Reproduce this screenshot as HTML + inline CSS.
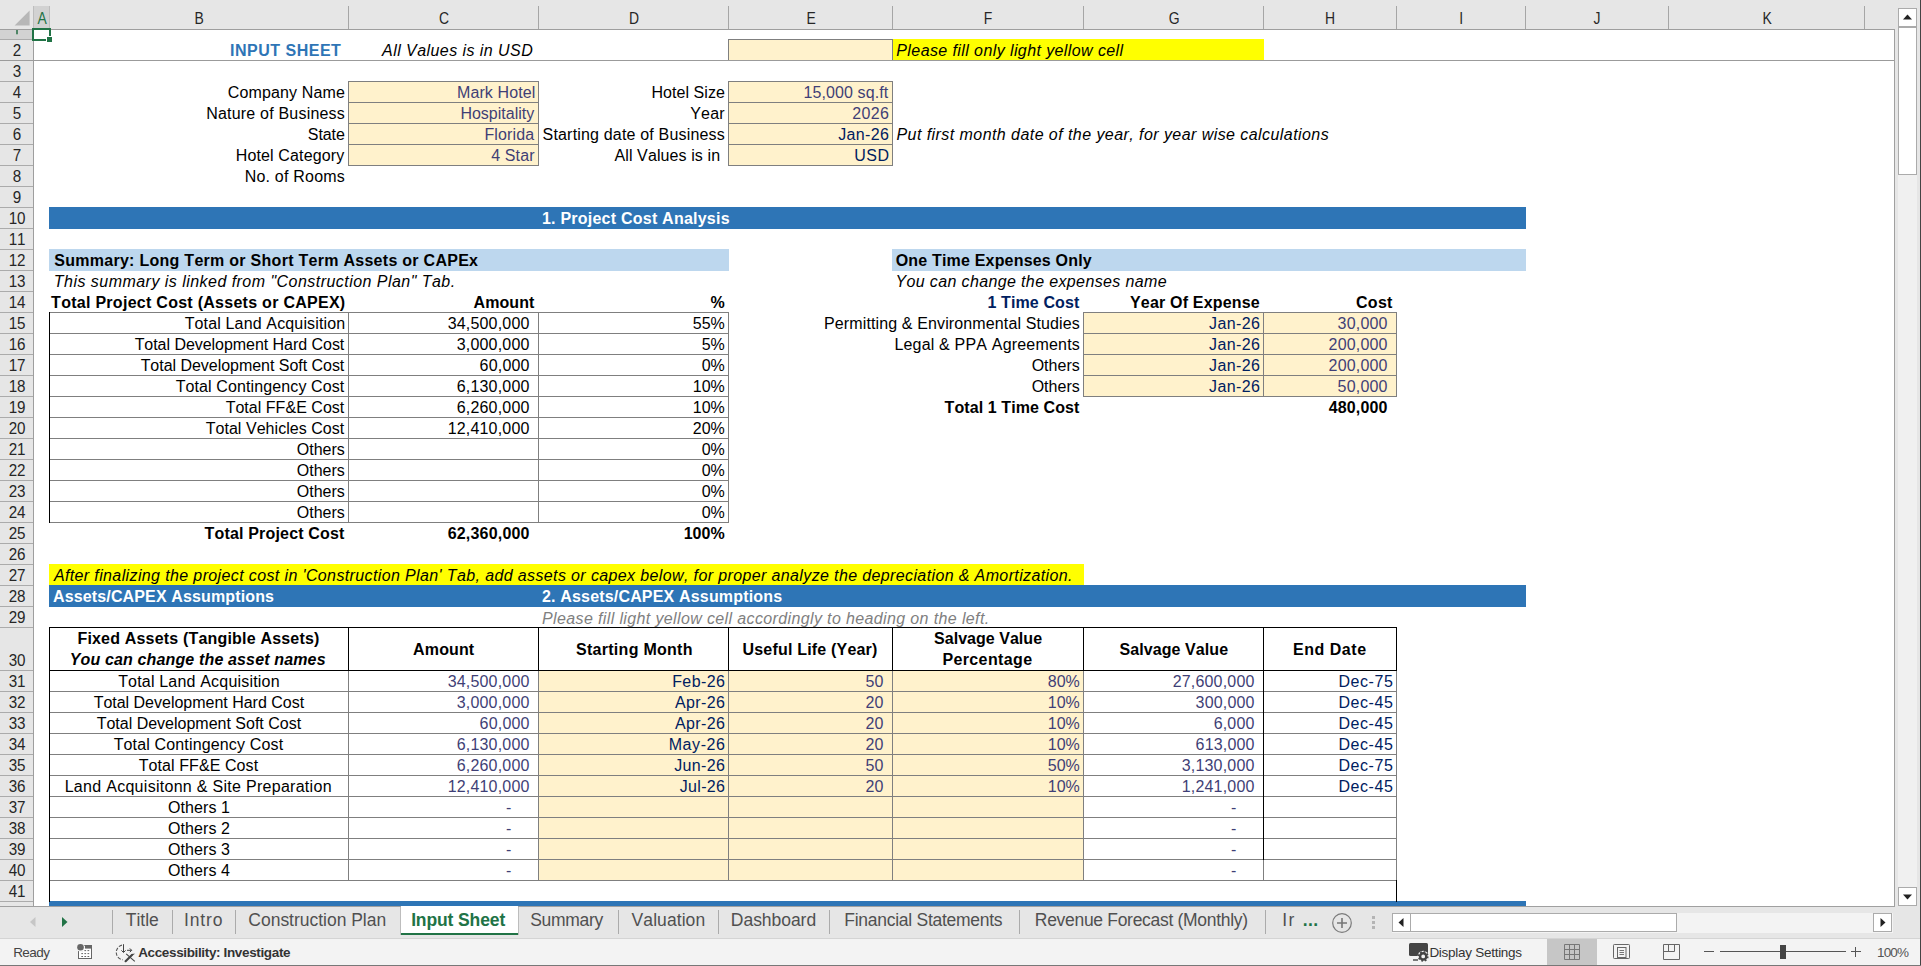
<!DOCTYPE html>
<html><head><meta charset="utf-8"><title>Input Sheet</title><style>
html,body{margin:0;padding:0}
body{width:1921px;height:966px;position:relative;overflow:hidden;background:#fff;font-family:"Liberation Sans",sans-serif;font-kerning:none;font-variant-ligatures:none}
body>div,body>svg{position:absolute}
.t{white-space:pre}
.h{font-size:16px;line-height:22px;height:22px;text-align:center;color:#262626;letter-spacing:-0.2px}
.tab{top:907px;height:27px;line-height:26px;font-size:17.5px;color:#4a4a4a;text-align:center;white-space:pre;letter-spacing:-0.1px}
.s{font-size:13px;line-height:18px;height:18px;color:#444;white-space:pre;margin-top:1px}
</style></head>
<body>
<div style="left:0px;top:0px;width:1921px;height:29px;background:#e6e6e6;"></div>
<div style="left:0px;top:30px;width:33px;height:876px;background:#e6e6e6;"></div>
<div style="left:34px;top:6px;width:15px;height:23px;background:#d2d2d2;"></div>
<div style="left:0px;top:30px;width:33px;height:9px;background:#d2d2d2;"></div>
<div style="left:0px;top:29px;width:1895px;height:1px;background:#9e9e9e;"></div>
<div style="left:33px;top:30px;width:1px;height:876px;background:#9e9e9e;"></div>
<div style="left:49px;top:6px;width:1px;height:23px;background:#bdbdbd;"></div>
<div style="left:348px;top:6px;width:1px;height:23px;background:#a6a6a6;"></div>
<div style="left:538px;top:6px;width:1px;height:23px;background:#a6a6a6;"></div>
<div style="left:728px;top:6px;width:1px;height:23px;background:#a6a6a6;"></div>
<div style="left:892px;top:6px;width:1px;height:23px;background:#a6a6a6;"></div>
<div style="left:1083px;top:6px;width:1px;height:23px;background:#a6a6a6;"></div>
<div style="left:1263px;top:6px;width:1px;height:23px;background:#a6a6a6;"></div>
<div style="left:1396px;top:6px;width:1px;height:23px;background:#a6a6a6;"></div>
<div style="left:1525px;top:6px;width:1px;height:23px;background:#a6a6a6;"></div>
<div style="left:1668px;top:6px;width:1px;height:23px;background:#a6a6a6;"></div>
<div style="left:1864px;top:6px;width:1px;height:23px;background:#a6a6a6;"></div>
<div style="left:33px;top:6px;width:1px;height:23px;background:#bdbdbd;"></div>
<svg style="left:13px;top:9px" width="18" height="18" viewBox="0 0 18 18"><path d="M16.6 1.6 L16.6 16.6 L1.6 16.6 Z" fill="#b7b7b7"/></svg>
<div class="h" style="left:-8.5px;width:100px;top:7.5px;color:#217346;transform:scaleX(0.87)">A</div>
<div class="h" style="left:149.0px;width:100px;top:7.5px;color:#262626;transform:scaleX(0.87)">B</div>
<div class="h" style="left:393.5px;width:100px;top:7.5px;color:#262626;transform:scaleX(0.87)">C</div>
<div class="h" style="left:583.5px;width:100px;top:7.5px;color:#262626;transform:scaleX(0.87)">D</div>
<div class="h" style="left:760.5px;width:100px;top:7.5px;color:#262626;transform:scaleX(0.87)">E</div>
<div class="h" style="left:938.0px;width:100px;top:7.5px;color:#262626;transform:scaleX(0.87)">F</div>
<div class="h" style="left:1123.5px;width:100px;top:7.5px;color:#262626;transform:scaleX(0.87)">G</div>
<div class="h" style="left:1280.0px;width:100px;top:7.5px;color:#262626;transform:scaleX(0.87)">H</div>
<div class="h" style="left:1411.0px;width:100px;top:7.5px;color:#262626;transform:scaleX(0.87)">I</div>
<div class="h" style="left:1547.0px;width:100px;top:7.5px;color:#262626;transform:scaleX(0.87)">J</div>
<div class="h" style="left:1716.5px;width:100px;top:7.5px;color:#262626;transform:scaleX(0.87)">K</div>
<div style="left:0px;top:39px;width:33px;height:1px;background:#ababab;"></div>
<div style="left:16px;top:30px;width:2px;height:4px;background:#4f8566;"></div>
<div style="left:16px;top:34px;width:2px;height:1px;background:#a9c0b1;"></div>
<div style="left:0px;top:60px;width:33px;height:1px;background:#ababab;"></div>
<div class="h" style="left:-33px;width:100px;top:40px;transform:scaleX(0.95)">2</div>
<div style="left:0px;top:81px;width:33px;height:1px;background:#ababab;"></div>
<div class="h" style="left:-33px;width:100px;top:61px;transform:scaleX(0.95)">3</div>
<div style="left:0px;top:102px;width:33px;height:1px;background:#ababab;"></div>
<div class="h" style="left:-33px;width:100px;top:82px;transform:scaleX(0.95)">4</div>
<div style="left:0px;top:123px;width:33px;height:1px;background:#ababab;"></div>
<div class="h" style="left:-33px;width:100px;top:103px;transform:scaleX(0.95)">5</div>
<div style="left:0px;top:144px;width:33px;height:1px;background:#ababab;"></div>
<div class="h" style="left:-33px;width:100px;top:124px;transform:scaleX(0.95)">6</div>
<div style="left:0px;top:165px;width:33px;height:1px;background:#ababab;"></div>
<div class="h" style="left:-33px;width:100px;top:145px;transform:scaleX(0.95)">7</div>
<div style="left:0px;top:186px;width:33px;height:1px;background:#ababab;"></div>
<div class="h" style="left:-33px;width:100px;top:166px;transform:scaleX(0.95)">8</div>
<div style="left:0px;top:207px;width:33px;height:1px;background:#ababab;"></div>
<div class="h" style="left:-33px;width:100px;top:187px;transform:scaleX(0.95)">9</div>
<div style="left:0px;top:228px;width:33px;height:1px;background:#ababab;"></div>
<div class="h" style="left:-33px;width:100px;top:208px;transform:scaleX(0.95)">10</div>
<div style="left:0px;top:249px;width:33px;height:1px;background:#ababab;"></div>
<div class="h" style="left:-33px;width:100px;top:229px;transform:scaleX(0.95)">11</div>
<div style="left:0px;top:270px;width:33px;height:1px;background:#ababab;"></div>
<div class="h" style="left:-33px;width:100px;top:250px;transform:scaleX(0.95)">12</div>
<div style="left:0px;top:291px;width:33px;height:1px;background:#ababab;"></div>
<div class="h" style="left:-33px;width:100px;top:271px;transform:scaleX(0.95)">13</div>
<div style="left:0px;top:312px;width:33px;height:1px;background:#ababab;"></div>
<div class="h" style="left:-33px;width:100px;top:292px;transform:scaleX(0.95)">14</div>
<div style="left:0px;top:333px;width:33px;height:1px;background:#ababab;"></div>
<div class="h" style="left:-33px;width:100px;top:313px;transform:scaleX(0.95)">15</div>
<div style="left:0px;top:354px;width:33px;height:1px;background:#ababab;"></div>
<div class="h" style="left:-33px;width:100px;top:334px;transform:scaleX(0.95)">16</div>
<div style="left:0px;top:375px;width:33px;height:1px;background:#ababab;"></div>
<div class="h" style="left:-33px;width:100px;top:355px;transform:scaleX(0.95)">17</div>
<div style="left:0px;top:396px;width:33px;height:1px;background:#ababab;"></div>
<div class="h" style="left:-33px;width:100px;top:376px;transform:scaleX(0.95)">18</div>
<div style="left:0px;top:417px;width:33px;height:1px;background:#ababab;"></div>
<div class="h" style="left:-33px;width:100px;top:397px;transform:scaleX(0.95)">19</div>
<div style="left:0px;top:438px;width:33px;height:1px;background:#ababab;"></div>
<div class="h" style="left:-33px;width:100px;top:418px;transform:scaleX(0.95)">20</div>
<div style="left:0px;top:459px;width:33px;height:1px;background:#ababab;"></div>
<div class="h" style="left:-33px;width:100px;top:439px;transform:scaleX(0.95)">21</div>
<div style="left:0px;top:480px;width:33px;height:1px;background:#ababab;"></div>
<div class="h" style="left:-33px;width:100px;top:460px;transform:scaleX(0.95)">22</div>
<div style="left:0px;top:501px;width:33px;height:1px;background:#ababab;"></div>
<div class="h" style="left:-33px;width:100px;top:481px;transform:scaleX(0.95)">23</div>
<div style="left:0px;top:522px;width:33px;height:1px;background:#ababab;"></div>
<div class="h" style="left:-33px;width:100px;top:502px;transform:scaleX(0.95)">24</div>
<div style="left:0px;top:543px;width:33px;height:1px;background:#ababab;"></div>
<div class="h" style="left:-33px;width:100px;top:523px;transform:scaleX(0.95)">25</div>
<div style="left:0px;top:564px;width:33px;height:1px;background:#ababab;"></div>
<div class="h" style="left:-33px;width:100px;top:544px;transform:scaleX(0.95)">26</div>
<div style="left:0px;top:585px;width:33px;height:1px;background:#ababab;"></div>
<div class="h" style="left:-33px;width:100px;top:565px;transform:scaleX(0.95)">27</div>
<div style="left:0px;top:606px;width:33px;height:1px;background:#ababab;"></div>
<div class="h" style="left:-33px;width:100px;top:586px;transform:scaleX(0.95)">28</div>
<div style="left:0px;top:627px;width:33px;height:1px;background:#ababab;"></div>
<div class="h" style="left:-33px;width:100px;top:607px;transform:scaleX(0.95)">29</div>
<div style="left:0px;top:670px;width:33px;height:1px;background:#ababab;"></div>
<div class="h" style="left:-33px;width:100px;top:650px;transform:scaleX(0.95)">30</div>
<div style="left:0px;top:691px;width:33px;height:1px;background:#ababab;"></div>
<div class="h" style="left:-33px;width:100px;top:671px;transform:scaleX(0.95)">31</div>
<div style="left:0px;top:712px;width:33px;height:1px;background:#ababab;"></div>
<div class="h" style="left:-33px;width:100px;top:692px;transform:scaleX(0.95)">32</div>
<div style="left:0px;top:733px;width:33px;height:1px;background:#ababab;"></div>
<div class="h" style="left:-33px;width:100px;top:713px;transform:scaleX(0.95)">33</div>
<div style="left:0px;top:754px;width:33px;height:1px;background:#ababab;"></div>
<div class="h" style="left:-33px;width:100px;top:734px;transform:scaleX(0.95)">34</div>
<div style="left:0px;top:775px;width:33px;height:1px;background:#ababab;"></div>
<div class="h" style="left:-33px;width:100px;top:755px;transform:scaleX(0.95)">35</div>
<div style="left:0px;top:796px;width:33px;height:1px;background:#ababab;"></div>
<div class="h" style="left:-33px;width:100px;top:776px;transform:scaleX(0.95)">36</div>
<div style="left:0px;top:817px;width:33px;height:1px;background:#ababab;"></div>
<div class="h" style="left:-33px;width:100px;top:797px;transform:scaleX(0.95)">37</div>
<div style="left:0px;top:838px;width:33px;height:1px;background:#ababab;"></div>
<div class="h" style="left:-33px;width:100px;top:818px;transform:scaleX(0.95)">38</div>
<div style="left:0px;top:859px;width:33px;height:1px;background:#ababab;"></div>
<div class="h" style="left:-33px;width:100px;top:839px;transform:scaleX(0.95)">39</div>
<div style="left:0px;top:880px;width:33px;height:1px;background:#ababab;"></div>
<div class="h" style="left:-33px;width:100px;top:860px;transform:scaleX(0.95)">40</div>
<div style="left:0px;top:901px;width:33px;height:1px;background:#ababab;"></div>
<div class="h" style="left:-33px;width:100px;top:881px;transform:scaleX(0.95)">41</div>
<div style="left:892px;top:39px;width:372px;height:22px;background:#ffff00;"></div>
<div style="left:728px;top:39px;width:165px;height:22px;background:#fff2cc;"></div>
<div style="left:348px;top:81px;width:191px;height:85px;background:#fff2cc;"></div>
<div style="left:728px;top:81px;width:165px;height:85px;background:#fff2cc;"></div>
<div style="left:49px;top:207px;width:1477px;height:22px;background:#2e75b6;"></div>
<div style="left:49px;top:249px;width:680px;height:22px;background:#bdd7ee;"></div>
<div style="left:892px;top:249px;width:634px;height:22px;background:#bdd7ee;"></div>
<div style="left:1083px;top:312px;width:314px;height:85px;background:#fff2cc;"></div>
<div style="left:49px;top:564px;width:1035px;height:22px;background:#ffff00;"></div>
<div style="left:49px;top:585px;width:1477px;height:22px;background:#2e75b6;"></div>
<div style="left:538px;top:670px;width:546px;height:211px;background:#fff2cc;"></div>
<div style="left:49px;top:901px;width:1477px;height:5px;background:#2e75b6;"></div>
<div style="left:728px;top:60px;width:165px;height:1px;background:#7f7f7f;"></div>
<div style="left:728px;top:39px;width:165px;height:1px;background:#7f7f7f;"></div>
<div style="left:728px;top:39px;width:1px;height:22px;background:#7f7f7f;"></div>
<div style="left:892px;top:39px;width:1px;height:22px;background:#7f7f7f;"></div>
<div style="left:348px;top:102px;width:191px;height:1px;background:#7f7f7f;"></div>
<div style="left:348px;top:123px;width:191px;height:1px;background:#7f7f7f;"></div>
<div style="left:348px;top:144px;width:191px;height:1px;background:#7f7f7f;"></div>
<div style="left:348px;top:165px;width:191px;height:1px;background:#7f7f7f;"></div>
<div style="left:348px;top:81px;width:191px;height:1px;background:#7f7f7f;"></div>
<div style="left:348px;top:81px;width:1px;height:85px;background:#7f7f7f;"></div>
<div style="left:538px;top:81px;width:1px;height:85px;background:#7f7f7f;"></div>
<div style="left:728px;top:102px;width:165px;height:1px;background:#7f7f7f;"></div>
<div style="left:728px;top:123px;width:165px;height:1px;background:#7f7f7f;"></div>
<div style="left:728px;top:144px;width:165px;height:1px;background:#7f7f7f;"></div>
<div style="left:728px;top:165px;width:165px;height:1px;background:#7f7f7f;"></div>
<div style="left:728px;top:81px;width:165px;height:1px;background:#7f7f7f;"></div>
<div style="left:728px;top:81px;width:1px;height:85px;background:#7f7f7f;"></div>
<div style="left:892px;top:81px;width:1px;height:85px;background:#7f7f7f;"></div>
<div style="left:49px;top:333px;width:680px;height:1px;background:#7f7f7f;"></div>
<div style="left:49px;top:354px;width:680px;height:1px;background:#7f7f7f;"></div>
<div style="left:49px;top:375px;width:680px;height:1px;background:#7f7f7f;"></div>
<div style="left:49px;top:396px;width:680px;height:1px;background:#7f7f7f;"></div>
<div style="left:49px;top:417px;width:680px;height:1px;background:#7f7f7f;"></div>
<div style="left:49px;top:438px;width:680px;height:1px;background:#7f7f7f;"></div>
<div style="left:49px;top:459px;width:680px;height:1px;background:#7f7f7f;"></div>
<div style="left:49px;top:480px;width:680px;height:1px;background:#7f7f7f;"></div>
<div style="left:49px;top:501px;width:680px;height:1px;background:#7f7f7f;"></div>
<div style="left:49px;top:522px;width:680px;height:1px;background:#7f7f7f;"></div>
<div style="left:49px;top:312px;width:680px;height:1px;background:#7f7f7f;"></div>
<div style="left:49px;top:312px;width:1px;height:211px;background:#7f7f7f;"></div>
<div style="left:348px;top:312px;width:1px;height:211px;background:#7f7f7f;"></div>
<div style="left:538px;top:312px;width:1px;height:211px;background:#7f7f7f;"></div>
<div style="left:728px;top:312px;width:1px;height:211px;background:#7f7f7f;"></div>
<div style="left:49px;top:312px;width:1px;height:211px;background:#000;"></div>
<div style="left:1083px;top:333px;width:314px;height:1px;background:#7f7f7f;"></div>
<div style="left:1083px;top:354px;width:314px;height:1px;background:#7f7f7f;"></div>
<div style="left:1083px;top:375px;width:314px;height:1px;background:#7f7f7f;"></div>
<div style="left:1083px;top:396px;width:314px;height:1px;background:#7f7f7f;"></div>
<div style="left:1083px;top:312px;width:314px;height:1px;background:#7f7f7f;"></div>
<div style="left:1083px;top:312px;width:1px;height:85px;background:#7f7f7f;"></div>
<div style="left:1263px;top:312px;width:1px;height:85px;background:#7f7f7f;"></div>
<div style="left:1396px;top:312px;width:1px;height:85px;background:#7f7f7f;"></div>
<div style="left:49px;top:691px;width:1348px;height:1px;background:#7f7f7f;"></div>
<div style="left:49px;top:712px;width:1348px;height:1px;background:#7f7f7f;"></div>
<div style="left:49px;top:733px;width:1348px;height:1px;background:#7f7f7f;"></div>
<div style="left:49px;top:754px;width:1348px;height:1px;background:#7f7f7f;"></div>
<div style="left:49px;top:775px;width:1348px;height:1px;background:#7f7f7f;"></div>
<div style="left:49px;top:796px;width:1348px;height:1px;background:#7f7f7f;"></div>
<div style="left:49px;top:817px;width:1348px;height:1px;background:#7f7f7f;"></div>
<div style="left:49px;top:838px;width:1348px;height:1px;background:#7f7f7f;"></div>
<div style="left:49px;top:859px;width:1348px;height:1px;background:#7f7f7f;"></div>
<div style="left:49px;top:880px;width:1348px;height:1px;background:#7f7f7f;"></div>
<div style="left:49px;top:670px;width:1348px;height:1px;background:#7f7f7f;"></div>
<div style="left:49px;top:670px;width:1px;height:211px;background:#7f7f7f;"></div>
<div style="left:348px;top:670px;width:1px;height:211px;background:#7f7f7f;"></div>
<div style="left:538px;top:670px;width:1px;height:211px;background:#7f7f7f;"></div>
<div style="left:728px;top:670px;width:1px;height:211px;background:#7f7f7f;"></div>
<div style="left:892px;top:670px;width:1px;height:211px;background:#7f7f7f;"></div>
<div style="left:1083px;top:670px;width:1px;height:211px;background:#7f7f7f;"></div>
<div style="left:1263px;top:670px;width:1px;height:211px;background:#7f7f7f;"></div>
<div style="left:1396px;top:670px;width:1px;height:211px;background:#7f7f7f;"></div>
<div style="left:49px;top:627px;width:1348px;height:1px;background:#000;"></div>
<div style="left:49px;top:670px;width:1348px;height:1px;background:#000;"></div>
<div style="left:49px;top:627px;width:1px;height:44px;background:#000;"></div>
<div style="left:348px;top:627px;width:1px;height:44px;background:#000;"></div>
<div style="left:538px;top:627px;width:1px;height:44px;background:#000;"></div>
<div style="left:728px;top:627px;width:1px;height:44px;background:#000;"></div>
<div style="left:892px;top:627px;width:1px;height:44px;background:#000;"></div>
<div style="left:1083px;top:627px;width:1px;height:44px;background:#000;"></div>
<div style="left:1263px;top:627px;width:1px;height:44px;background:#000;"></div>
<div style="left:1396px;top:627px;width:1px;height:44px;background:#000;"></div>
<div style="left:49px;top:627px;width:1px;height:275px;background:#000;"></div>
<div style="left:1263px;top:627px;width:1px;height:233px;background:#000;"></div>
<div style="left:1396px;top:880px;width:1px;height:22px;background:#000;"></div>
<div style="left:0px;top:60px;width:1895px;height:1px;background:#9b9b9b;"></div>
<div class="t" style="top:40px;height:21px;line-height:21px;font-size:16px;color:#2e75b6;font-weight:bold;left:229.93px;letter-spacing:0.515px;">INPUT SHEET</div>
<div class="t" style="top:40px;height:21px;line-height:21px;font-size:16px;color:#000;font-style:italic;left:382.09px;letter-spacing:0.440px;">All Values is in USD</div>
<div class="t" style="top:40px;height:21px;line-height:21px;font-size:16px;color:#000;font-style:italic;left:896.31px;letter-spacing:0.406px;">Please fill only light yellow cell</div>
<div class="t" style="top:82px;height:21px;line-height:21px;font-size:16px;color:#000;left:227.69px;letter-spacing:0.147px;">Company Name</div>
<div class="t" style="top:103px;height:21px;line-height:21px;font-size:16px;color:#000;left:206.19px;letter-spacing:0.201px;">Nature of Business</div>
<div class="t" style="top:124px;height:21px;line-height:21px;font-size:16px;color:#000;left:307.77px;letter-spacing:-0.055px;">State</div>
<div class="t" style="top:145px;height:21px;line-height:21px;font-size:16px;color:#000;left:235.69px;letter-spacing:0.140px;">Hotel Category</div>
<div class="t" style="top:166px;height:21px;line-height:21px;font-size:16px;color:#000;left:244.69px;letter-spacing:0.207px;">No. of Rooms</div>
<div class="t" style="top:82px;height:21px;line-height:21px;font-size:16px;color:#3f3f76;left:456.99px;letter-spacing:0.103px;">Mark Hotel</div>
<div class="t" style="top:103px;height:21px;line-height:21px;font-size:16px;color:#3f3f76;left:460.39px;letter-spacing:0.004px;">Hospitality</div>
<div class="t" style="top:124px;height:21px;line-height:21px;font-size:16px;color:#3f3f76;left:484.39px;letter-spacing:0.151px;">Florida</div>
<div class="t" style="top:145px;height:21px;line-height:21px;font-size:16px;color:#3f3f76;left:491.33px;letter-spacing:0.089px;">4 Star</div>
<div class="t" style="top:82px;height:21px;line-height:21px;font-size:16px;color:#000;left:651.39px;letter-spacing:0.067px;">Hotel Size</div>
<div class="t" style="top:103px;height:21px;line-height:21px;font-size:16px;color:#000;left:690.35px;letter-spacing:0.107px;">Year</div>
<div class="t" style="top:124px;height:21px;line-height:21px;font-size:16px;color:#000;left:542.57px;letter-spacing:0.180px;">Starting date of Business</div>
<div class="t" style="top:145px;height:21px;line-height:21px;font-size:16px;color:#000;left:614.47px;letter-spacing:0.102px;">All Values is in</div>
<div class="t" style="top:82px;height:21px;line-height:21px;font-size:16px;color:#3f3f76;left:803.38px;letter-spacing:0.120px;">15,000 sq.ft</div>
<div class="t" style="top:103px;height:21px;line-height:21px;font-size:16px;color:#3f3f76;left:852.20px;letter-spacing:0.371px;">2026</div>
<div class="t" style="top:124px;height:21px;line-height:21px;font-size:16px;color:#002060;left:838.25px;letter-spacing:0.346px;">Jan-26</div>
<div class="t" style="top:145px;height:21px;line-height:21px;font-size:16px;color:#002060;left:854.37px;letter-spacing:0.409px;">USD</div>
<div class="t" style="top:124px;height:21px;line-height:21px;font-size:16px;color:#000;font-style:italic;left:896.51px;letter-spacing:0.437px;">Put first month date of the year, for year wise calculations</div>
<div class="t" style="top:208px;height:21px;line-height:21px;font-size:16px;color:#fff;font-weight:bold;left:541.99px;letter-spacing:0.229px;">1. Project Cost Analysis</div>
<div class="t" style="top:250px;height:21px;line-height:21px;font-size:16px;color:#000;font-weight:bold;left:54.24px;letter-spacing:0.277px;">Summary: Long Term or Short Term Assets or CAPEx</div>
<div class="t" style="top:250px;height:21px;line-height:21px;font-size:16px;color:#000;font-weight:bold;left:895.64px;letter-spacing:0.189px;">One Time Expenses Only</div>
<div class="t" style="top:271px;height:21px;line-height:21px;font-size:16px;color:#000;font-style:italic;left:53.86px;letter-spacing:0.463px;">This summary is linked from &quot;Construction Plan&quot; Tab.</div>
<div class="t" style="top:271px;height:21px;line-height:21px;font-size:16px;color:#000;font-style:italic;left:895.44px;letter-spacing:0.368px;">You can change the expenses name</div>
<div class="t" style="top:292px;height:21px;line-height:21px;font-size:16px;color:#000;font-weight:bold;left:51.12px;letter-spacing:0.274px;">Total Project Cost (Assets or CAPEX)</div>
<div class="t" style="top:292px;height:21px;line-height:21px;font-size:16px;color:#000;font-weight:bold;letter-spacing:0.095px;right:1386.51px;text-align:right;">Amount</div>
<div class="t" style="top:292px;height:21px;line-height:21px;font-size:16px;color:#000;font-weight:bold;letter-spacing:-0.227px;right:1196.60px;text-align:right;">%</div>
<div class="t" style="top:292px;height:21px;line-height:21px;font-size:16px;color:#002060;font-weight:bold;left:987.39px;letter-spacing:0.132px;">1 Time Cost</div>
<div class="t" style="top:292px;height:21px;line-height:21px;font-size:16px;color:#000;font-weight:bold;left:1130.03px;letter-spacing:0.182px;">Year Of Expense</div>
<div class="t" style="top:292px;height:21px;line-height:21px;font-size:16px;color:#000;font-weight:bold;left:1356.04px;letter-spacing:0.266px;">Cost</div>
<div class="t" style="top:313px;height:21px;line-height:21px;font-size:16px;color:#000;left:184.64px;letter-spacing:0.151px;">Total Land Acquisition</div>
<div class="t" style="top:313px;height:21px;line-height:21px;font-size:16px;color:#000;letter-spacing:0.192px;right:1391.38px;text-align:right;">34,500,000</div>
<div class="t" style="top:313px;height:21px;line-height:21px;font-size:16px;color:#000;letter-spacing:-0.008px;right:1196.24px;text-align:right;">55%</div>
<div class="t" style="top:334px;height:21px;line-height:21px;font-size:16px;color:#000;left:134.64px;letter-spacing:-0.042px;">Total Development Hard Cost</div>
<div class="t" style="top:334px;height:21px;line-height:21px;font-size:16px;color:#000;letter-spacing:0.202px;right:1391.37px;text-align:right;">3,000,000</div>
<div class="t" style="top:334px;height:21px;line-height:21px;font-size:16px;color:#000;letter-spacing:-0.062px;right:1196.29px;text-align:right;">5%</div>
<div class="t" style="top:355px;height:21px;line-height:21px;font-size:16px;color:#000;left:140.64px;letter-spacing:-0.033px;">Total Development Soft Cost</div>
<div class="t" style="top:355px;height:21px;line-height:21px;font-size:16px;color:#000;letter-spacing:0.177px;right:1391.40px;text-align:right;">60,000</div>
<div class="t" style="top:355px;height:21px;line-height:21px;font-size:16px;color:#000;letter-spacing:-0.062px;right:1196.29px;text-align:right;">0%</div>
<div class="t" style="top:376px;height:21px;line-height:21px;font-size:16px;color:#000;left:175.64px;letter-spacing:0.113px;">Total Contingency Cost</div>
<div class="t" style="top:376px;height:21px;line-height:21px;font-size:16px;color:#000;letter-spacing:0.202px;right:1391.37px;text-align:right;">6,130,000</div>
<div class="t" style="top:376px;height:21px;line-height:21px;font-size:16px;color:#000;letter-spacing:-0.008px;right:1196.24px;text-align:right;">10%</div>
<div class="t" style="top:397px;height:21px;line-height:21px;font-size:16px;color:#000;left:225.64px;letter-spacing:0.030px;">Total FF&amp;E Cost</div>
<div class="t" style="top:397px;height:21px;line-height:21px;font-size:16px;color:#000;letter-spacing:0.202px;right:1391.37px;text-align:right;">6,260,000</div>
<div class="t" style="top:397px;height:21px;line-height:21px;font-size:16px;color:#000;letter-spacing:-0.008px;right:1196.24px;text-align:right;">10%</div>
<div class="t" style="top:418px;height:21px;line-height:21px;font-size:16px;color:#000;left:205.64px;letter-spacing:0.047px;">Total Vehicles Cost</div>
<div class="t" style="top:418px;height:21px;line-height:21px;font-size:16px;color:#000;letter-spacing:0.192px;right:1391.38px;text-align:right;">12,410,000</div>
<div class="t" style="top:418px;height:21px;line-height:21px;font-size:16px;color:#000;letter-spacing:-0.008px;right:1196.24px;text-align:right;">20%</div>
<div class="t" style="top:439px;height:21px;line-height:21px;font-size:16px;color:#000;left:296.74px;letter-spacing:0.004px;">Others</div>
<div class="t" style="top:439px;height:21px;line-height:21px;font-size:16px;color:#000;letter-spacing:-0.062px;right:1196.29px;text-align:right;">0%</div>
<div class="t" style="top:460px;height:21px;line-height:21px;font-size:16px;color:#000;left:296.74px;letter-spacing:0.004px;">Others</div>
<div class="t" style="top:460px;height:21px;line-height:21px;font-size:16px;color:#000;letter-spacing:-0.062px;right:1196.29px;text-align:right;">0%</div>
<div class="t" style="top:481px;height:21px;line-height:21px;font-size:16px;color:#000;left:296.74px;letter-spacing:0.004px;">Others</div>
<div class="t" style="top:481px;height:21px;line-height:21px;font-size:16px;color:#000;letter-spacing:-0.062px;right:1196.29px;text-align:right;">0%</div>
<div class="t" style="top:502px;height:21px;line-height:21px;font-size:16px;color:#000;left:296.74px;letter-spacing:0.004px;">Others</div>
<div class="t" style="top:502px;height:21px;line-height:21px;font-size:16px;color:#000;letter-spacing:-0.062px;right:1196.29px;text-align:right;">0%</div>
<div class="t" style="top:523px;height:21px;line-height:21px;font-size:16px;color:#000;font-weight:bold;letter-spacing:0.172px;right:1576.43px;text-align:right;">Total Project Cost</div>
<div class="t" style="top:523px;height:21px;line-height:21px;font-size:16px;color:#000;font-weight:bold;letter-spacing:0.192px;right:1391.35px;text-align:right;">62,360,000</div>
<div class="t" style="top:523px;height:21px;line-height:21px;font-size:16px;color:#000;font-weight:bold;letter-spacing:0.020px;right:1196.36px;text-align:right;">100%</div>
<div class="t" style="top:313px;height:21px;line-height:21px;font-size:16px;color:#000;left:823.99px;letter-spacing:0.125px;">Permitting &amp; Environmental Studies</div>
<div class="t" style="top:313px;height:21px;line-height:21px;font-size:16px;color:#002060;left:1209.05px;letter-spacing:0.386px;">Jan-26</div>
<div class="t" style="top:313px;height:21px;line-height:21px;font-size:16px;color:#3f3f76;letter-spacing:0.177px;right:533.40px;text-align:right;">30,000</div>
<div class="t" style="top:334px;height:21px;line-height:21px;font-size:16px;color:#000;left:894.39px;letter-spacing:0.188px;">Legal &amp; PPA Agreements</div>
<div class="t" style="top:334px;height:21px;line-height:21px;font-size:16px;color:#002060;left:1209.05px;letter-spacing:0.386px;">Jan-26</div>
<div class="t" style="top:334px;height:21px;line-height:21px;font-size:16px;color:#3f3f76;letter-spacing:0.166px;right:533.41px;text-align:right;">200,000</div>
<div class="t" style="top:355px;height:21px;line-height:21px;font-size:16px;color:#000;left:1031.64px;letter-spacing:0.024px;">Others</div>
<div class="t" style="top:355px;height:21px;line-height:21px;font-size:16px;color:#002060;left:1209.05px;letter-spacing:0.386px;">Jan-26</div>
<div class="t" style="top:355px;height:21px;line-height:21px;font-size:16px;color:#3f3f76;letter-spacing:0.166px;right:533.41px;text-align:right;">200,000</div>
<div class="t" style="top:376px;height:21px;line-height:21px;font-size:16px;color:#000;left:1031.64px;letter-spacing:0.024px;">Others</div>
<div class="t" style="top:376px;height:21px;line-height:21px;font-size:16px;color:#002060;left:1209.05px;letter-spacing:0.386px;">Jan-26</div>
<div class="t" style="top:376px;height:21px;line-height:21px;font-size:16px;color:#3f3f76;letter-spacing:0.177px;right:533.40px;text-align:right;">50,000</div>
<div class="t" style="top:397px;height:21px;line-height:21px;font-size:16px;color:#000;font-weight:bold;left:944.62px;letter-spacing:0.089px;">Total 1 Time Cost</div>
<div class="t" style="top:397px;height:21px;line-height:21px;font-size:16px;color:#000;font-weight:bold;letter-spacing:0.166px;right:533.38px;text-align:right;">480,000</div>
<div class="t" style="top:565px;height:21px;line-height:21px;font-size:16px;color:#000;font-style:italic;left:53.89px;letter-spacing:0.374px;">After finalizing the project cost in &#x27;Construction Plan&#x27; Tab, add assets or capex below, for proper analyze the depreciation &amp; Amortization.</div>
<div class="t" style="top:586px;height:21px;line-height:21px;font-size:16px;color:#fff;font-weight:bold;left:53.10px;letter-spacing:0.131px;">Assets/CAPEX Assumptions</div>
<div class="t" style="top:586px;height:21px;line-height:21px;font-size:16px;color:#fff;font-weight:bold;left:541.95px;letter-spacing:0.176px;">2. Assets/CAPEX Assumptions</div>
<div class="t" style="top:608px;height:21px;line-height:21px;font-size:16px;color:#808080;font-style:italic;left:542.01px;letter-spacing:0.372px;">Please fill light yellow cell accordingly to heading on the left.</div>
<div class="t" style="top:628px;height:21px;line-height:21px;font-size:16px;color:#000;font-weight:bold;left:77.43px;letter-spacing:0.185px;">Fixed Assets (Tangible Assets)</div>
<div class="t" style="top:649px;height:21px;line-height:21px;font-size:16px;color:#000;font-weight:bold;font-style:italic;left:69.66px;letter-spacing:0.146px;">You can change the asset names</div>
<div class="t" style="top:639px;height:21px;line-height:21px;font-size:16px;color:#000;font-weight:bold;left:413.10px;letter-spacing:0.133px;">Amount</div>
<div class="t" style="top:639px;height:21px;line-height:21px;font-size:16px;color:#000;font-weight:bold;left:576.04px;letter-spacing:0.276px;">Starting Month</div>
<div class="t" style="top:639px;height:21px;line-height:21px;font-size:16px;color:#000;font-weight:bold;left:742.54px;letter-spacing:0.187px;">Useful Life (Year)</div>
<div class="t" style="top:628px;height:21px;line-height:21px;font-size:16px;color:#000;font-weight:bold;left:934.04px;letter-spacing:0.033px;">Salvage Value</div>
<div class="t" style="top:649px;height:21px;line-height:21px;font-size:16px;color:#000;font-weight:bold;left:942.43px;letter-spacing:0.372px;">Percentage</div>
<div class="t" style="top:639px;height:21px;line-height:21px;font-size:16px;color:#000;font-weight:bold;left:1119.54px;letter-spacing:0.074px;">Salvage Value</div>
<div class="t" style="top:639px;height:21px;line-height:21px;font-size:16px;color:#000;font-weight:bold;left:1292.93px;letter-spacing:0.539px;">End Date</div>
<div class="t" style="top:671px;height:21px;line-height:21px;font-size:16px;color:#000;left:118.14px;letter-spacing:0.189px;">Total Land Acquisition</div>
<div class="t" style="top:671px;height:21px;line-height:21px;font-size:16px;color:#3f3f76;letter-spacing:0.192px;right:1391.38px;text-align:right;">34,500,000</div>
<div class="t" style="top:671px;height:21px;line-height:21px;font-size:16px;color:#002060;left:672.19px;letter-spacing:0.404px;">Feb-26</div>
<div class="t" style="top:671px;height:21px;line-height:21px;font-size:16px;color:#3f3f76;letter-spacing:0.102px;right:1037.47px;text-align:right;">50</div>
<div class="t" style="top:671px;height:21px;line-height:21px;font-size:16px;color:#3f3f76;letter-spacing:-0.008px;right:841.24px;text-align:right;">80%</div>
<div class="t" style="top:671px;height:21px;line-height:21px;font-size:16px;color:#3f3f76;letter-spacing:0.192px;right:666.38px;text-align:right;">27,600,000</div>
<div class="t" style="top:671px;height:21px;line-height:21px;font-size:16px;color:#002060;left:1338.49px;letter-spacing:0.561px;">Dec-75</div>
<div class="t" style="top:692px;height:21px;line-height:21px;font-size:16px;color:#000;left:93.64px;letter-spacing:-0.011px;">Total Development Hard Cost</div>
<div class="t" style="top:692px;height:21px;line-height:21px;font-size:16px;color:#3f3f76;letter-spacing:0.202px;right:1391.37px;text-align:right;">3,000,000</div>
<div class="t" style="top:692px;height:21px;line-height:21px;font-size:16px;color:#002060;left:674.97px;letter-spacing:0.382px;">Apr-26</div>
<div class="t" style="top:692px;height:21px;line-height:21px;font-size:16px;color:#3f3f76;letter-spacing:0.102px;right:1037.47px;text-align:right;">20</div>
<div class="t" style="top:692px;height:21px;line-height:21px;font-size:16px;color:#3f3f76;letter-spacing:-0.008px;right:841.24px;text-align:right;">10%</div>
<div class="t" style="top:692px;height:21px;line-height:21px;font-size:16px;color:#3f3f76;letter-spacing:0.166px;right:666.41px;text-align:right;">300,000</div>
<div class="t" style="top:692px;height:21px;line-height:21px;font-size:16px;color:#002060;left:1338.49px;letter-spacing:0.561px;">Dec-45</div>
<div class="t" style="top:713px;height:21px;line-height:21px;font-size:16px;color:#000;left:96.64px;letter-spacing:-0.002px;">Total Development Soft Cost</div>
<div class="t" style="top:713px;height:21px;line-height:21px;font-size:16px;color:#3f3f76;letter-spacing:0.177px;right:1391.40px;text-align:right;">60,000</div>
<div class="t" style="top:713px;height:21px;line-height:21px;font-size:16px;color:#002060;left:674.97px;letter-spacing:0.382px;">Apr-26</div>
<div class="t" style="top:713px;height:21px;line-height:21px;font-size:16px;color:#3f3f76;letter-spacing:0.102px;right:1037.47px;text-align:right;">20</div>
<div class="t" style="top:713px;height:21px;line-height:21px;font-size:16px;color:#3f3f76;letter-spacing:-0.008px;right:841.24px;text-align:right;">10%</div>
<div class="t" style="top:713px;height:21px;line-height:21px;font-size:16px;color:#3f3f76;letter-spacing:0.192px;right:666.38px;text-align:right;">6,000</div>
<div class="t" style="top:713px;height:21px;line-height:21px;font-size:16px;color:#002060;left:1338.49px;letter-spacing:0.561px;">Dec-45</div>
<div class="t" style="top:734px;height:21px;line-height:21px;font-size:16px;color:#000;left:113.64px;letter-spacing:0.151px;">Total Contingency Cost</div>
<div class="t" style="top:734px;height:21px;line-height:21px;font-size:16px;color:#3f3f76;letter-spacing:0.202px;right:1391.37px;text-align:right;">6,130,000</div>
<div class="t" style="top:734px;height:21px;line-height:21px;font-size:16px;color:#002060;left:668.69px;letter-spacing:0.573px;">May-26</div>
<div class="t" style="top:734px;height:21px;line-height:21px;font-size:16px;color:#3f3f76;letter-spacing:0.102px;right:1037.47px;text-align:right;">20</div>
<div class="t" style="top:734px;height:21px;line-height:21px;font-size:16px;color:#3f3f76;letter-spacing:-0.008px;right:841.24px;text-align:right;">10%</div>
<div class="t" style="top:734px;height:21px;line-height:21px;font-size:16px;color:#3f3f76;letter-spacing:0.166px;right:666.41px;text-align:right;">613,000</div>
<div class="t" style="top:734px;height:21px;line-height:21px;font-size:16px;color:#002060;left:1338.49px;letter-spacing:0.561px;">Dec-45</div>
<div class="t" style="top:755px;height:21px;line-height:21px;font-size:16px;color:#000;left:138.64px;letter-spacing:0.088px;">Total FF&amp;E Cost</div>
<div class="t" style="top:755px;height:21px;line-height:21px;font-size:16px;color:#3f3f76;letter-spacing:0.202px;right:1391.37px;text-align:right;">6,260,000</div>
<div class="t" style="top:755px;height:21px;line-height:21px;font-size:16px;color:#002060;left:674.25px;letter-spacing:0.346px;">Jun-26</div>
<div class="t" style="top:755px;height:21px;line-height:21px;font-size:16px;color:#3f3f76;letter-spacing:0.102px;right:1037.47px;text-align:right;">50</div>
<div class="t" style="top:755px;height:21px;line-height:21px;font-size:16px;color:#3f3f76;letter-spacing:-0.008px;right:841.24px;text-align:right;">50%</div>
<div class="t" style="top:755px;height:21px;line-height:21px;font-size:16px;color:#3f3f76;letter-spacing:0.202px;right:666.37px;text-align:right;">3,130,000</div>
<div class="t" style="top:755px;height:21px;line-height:21px;font-size:16px;color:#002060;left:1338.49px;letter-spacing:0.561px;">Dec-75</div>
<div class="t" style="top:776px;height:21px;line-height:21px;font-size:16px;color:#000;left:64.69px;letter-spacing:0.288px;">Land Acquisitonn &amp; Site Preparation</div>
<div class="t" style="top:776px;height:21px;line-height:21px;font-size:16px;color:#3f3f76;letter-spacing:0.192px;right:1391.38px;text-align:right;">12,410,000</div>
<div class="t" style="top:776px;height:21px;line-height:21px;font-size:16px;color:#002060;left:679.75px;letter-spacing:0.315px;">Jul-26</div>
<div class="t" style="top:776px;height:21px;line-height:21px;font-size:16px;color:#3f3f76;letter-spacing:0.102px;right:1037.47px;text-align:right;">20</div>
<div class="t" style="top:776px;height:21px;line-height:21px;font-size:16px;color:#3f3f76;letter-spacing:-0.008px;right:841.24px;text-align:right;">10%</div>
<div class="t" style="top:776px;height:21px;line-height:21px;font-size:16px;color:#3f3f76;letter-spacing:0.202px;right:666.37px;text-align:right;">1,241,000</div>
<div class="t" style="top:776px;height:21px;line-height:21px;font-size:16px;color:#002060;left:1338.49px;letter-spacing:0.561px;">Dec-45</div>
<div class="t" style="top:797px;height:21px;line-height:21px;font-size:16px;color:#000;letter-spacing:0.080px;left:-300.96px;width:1000px;text-align:center;">Others 1</div>
<div class="t" style="top:797px;height:21px;line-height:21px;font-size:16px;color:#3f3f76;letter-spacing:-0.328px;right:1409.92px;text-align:right;">-</div>
<div class="t" style="top:797px;height:21px;line-height:21px;font-size:16px;color:#3f3f76;letter-spacing:-0.328px;right:684.92px;text-align:right;">-</div>
<div class="t" style="top:818px;height:21px;line-height:21px;font-size:16px;color:#000;letter-spacing:0.080px;left:-300.96px;width:1000px;text-align:center;">Others 2</div>
<div class="t" style="top:818px;height:21px;line-height:21px;font-size:16px;color:#3f3f76;letter-spacing:-0.328px;right:1409.92px;text-align:right;">-</div>
<div class="t" style="top:818px;height:21px;line-height:21px;font-size:16px;color:#3f3f76;letter-spacing:-0.328px;right:684.92px;text-align:right;">-</div>
<div class="t" style="top:839px;height:21px;line-height:21px;font-size:16px;color:#000;letter-spacing:0.080px;left:-300.96px;width:1000px;text-align:center;">Others 3</div>
<div class="t" style="top:839px;height:21px;line-height:21px;font-size:16px;color:#3f3f76;letter-spacing:-0.328px;right:1409.92px;text-align:right;">-</div>
<div class="t" style="top:839px;height:21px;line-height:21px;font-size:16px;color:#3f3f76;letter-spacing:-0.328px;right:684.92px;text-align:right;">-</div>
<div class="t" style="top:860px;height:21px;line-height:21px;font-size:16px;color:#000;letter-spacing:0.080px;left:-300.96px;width:1000px;text-align:center;">Others 4</div>
<div class="t" style="top:860px;height:21px;line-height:21px;font-size:16px;color:#3f3f76;letter-spacing:-0.328px;right:1409.92px;text-align:right;">-</div>
<div class="t" style="top:860px;height:21px;line-height:21px;font-size:16px;color:#3f3f76;letter-spacing:-0.328px;right:684.92px;text-align:right;">-</div>
<div style="left:32px;top:28px;width:15px;height:9px;border:2px solid #217346;background:#fff"></div>
<div style="left:46px;top:36px;width:7px;height:7px;background:#fff;"></div>
<div style="left:47px;top:37px;width:5px;height:5px;background:#217346;"></div>
<div style="left:1894px;top:30px;width:1px;height:877px;background:#a0a0a0;"></div>
<div style="left:0px;top:906px;width:1895px;height:1px;background:#a0a0a0;"></div>
<div style="left:1895px;top:0px;width:26px;height:938px;background:#e6e6e6;"></div>
<div style="left:1898px;top:27px;width:19px;height:860px;background:#f0f0f0;"></div>
<div style="left:1898px;top:8px;width:17px;height:17px;border:1px solid #ababab;background:#fff"></div>
<svg style="left:1898px;top:8px" width="19" height="19" viewBox="0 0 19 19"><path d="M5 11.5 L9.5 6.5 L14 11.5 Z" fill="#222"/></svg>
<div style="left:1898px;top:27px;width:17px;height:146px;border:1px solid #ababab;background:#fff"></div>
<div style="left:1898px;top:887px;width:17px;height:17px;border:1px solid #ababab;background:#fff"></div>
<svg style="left:1898px;top:887px" width="19" height="19" viewBox="0 0 19 19"><path d="M5 7.5 L9.5 12.5 L14 7.5 Z" fill="#222"/></svg>
<div style="left:0px;top:907px;width:1895px;height:31px;background:#e6e6e6;"></div>
<svg style="left:26px;top:914px" width="50" height="16" viewBox="0 0 50 16"><path d="M9.5 3 L9.5 13 L4 8 Z" fill="#c6c6c6"/><path d="M36 3 L36 13 L41.5 8 Z" fill="#217346"/></svg>
<div style="left:125.86px;top:907px;height:26px;line-height:26px;font-size:17.5px;letter-spacing:-0.035px;color:#505050;white-space:pre;">Title</div>
<div style="left:183.89px;top:907px;height:26px;line-height:26px;font-size:17.5px;letter-spacing:0.896px;color:#505050;white-space:pre;">Intro</div>
<div style="left:248.36px;top:907px;height:26px;line-height:26px;font-size:17.5px;letter-spacing:-0.022px;color:#505050;white-space:pre;">Construction Plan</div>
<div style="left:401px;top:906px;width:117px;height:27px;background:#fff;"></div>
<div style="left:401px;top:933px;width:117px;height:2px;background:#217346;"></div>
<div style="left:400px;top:907px;width:1px;height:28px;background:#bdbdbd;"></div>
<div style="left:518px;top:907px;width:1px;height:28px;background:#bdbdbd;"></div>
<div style="left:411.13px;top:907px;height:26px;line-height:26px;font-size:17.5px;letter-spacing:-0.119px;color:#217346;white-space:pre;font-weight:bold;">Input Sheet</div>
<div style="left:530.21px;top:907px;height:26px;line-height:26px;font-size:17.5px;letter-spacing:-0.290px;color:#505050;white-space:pre;">Summary</div>
<div style="left:631.62px;top:907px;height:26px;line-height:26px;font-size:17.5px;letter-spacing:0.067px;color:#505050;white-space:pre;">Valuation</div>
<div style="left:730.86px;top:907px;height:26px;line-height:26px;font-size:17.5px;letter-spacing:-0.044px;color:#505050;white-space:pre;">Dashboard</div>
<div style="left:844.26px;top:907px;height:26px;line-height:26px;font-size:17.5px;letter-spacing:-0.266px;color:#505050;white-space:pre;">Financial Statements</div>
<div style="left:1034.81px;top:907px;height:26px;line-height:26px;font-size:17.5px;letter-spacing:-0.301px;color:#505050;white-space:pre;">Revenue Forecast (Monthly)</div>
<div style="left:112px;top:910px;width:1px;height:24px;background:#ababab;"></div>
<div style="left:172px;top:910px;width:1px;height:24px;background:#ababab;"></div>
<div style="left:235px;top:910px;width:1px;height:24px;background:#ababab;"></div>
<div style="left:618px;top:910px;width:1px;height:24px;background:#ababab;"></div>
<div style="left:718px;top:910px;width:1px;height:24px;background:#ababab;"></div>
<div style="left:829px;top:910px;width:1px;height:24px;background:#ababab;"></div>
<div style="left:1019px;top:910px;width:1px;height:24px;background:#ababab;"></div>
<div style="left:1265px;top:910px;width:1px;height:24px;background:#ababab;"></div>
<div style="left:1282.14px;top:907px;height:26px;line-height:26px;font-size:17.5px;letter-spacing:1.466px;color:#505050;white-space:pre;">Ir</div>
<div style="left:1302.81px;top:907px;height:26px;line-height:26px;font-size:17.5px;letter-spacing:0.403px;color:#217346;white-space:pre;font-weight:bold;">...</div>
<svg style="left:1331px;top:912px" width="22" height="22" viewBox="0 0 22 22"><circle cx="11" cy="11" r="9.3" fill="none" stroke="#7a7a7a" stroke-width="1.2"/><path d="M6 11 H16 M11 6 V16" stroke="#777" stroke-width="1.6"/></svg>
<div style="left:1372px;top:916px;width:3px;height:3px;background:#b4b4b4;"></div>
<div style="left:1372px;top:921px;width:3px;height:3px;background:#b4b4b4;"></div>
<div style="left:1372px;top:926px;width:3px;height:3px;background:#b4b4b4;"></div>
<div style="left:1392px;top:913px;width:501px;height:20px;background:#f3f3f3;"></div>
<div style="left:1392px;top:913px;width:17px;height:17px;border:1px solid #ababab;background:#fff"></div>
<svg style="left:1392px;top:913px" width="19" height="19" viewBox="0 0 19 19"><path d="M11.5 5 L6.5 9.5 L11.5 14 Z" fill="#222"/></svg>
<div style="left:1410px;top:913px;width:265px;height:17px;border:1px solid #ababab;background:#fff"></div>
<div style="left:1873px;top:913px;width:17px;height:17px;border:1px solid #ababab;background:#fff"></div>
<svg style="left:1873px;top:913px" width="19" height="19" viewBox="0 0 19 19"><path d="M7.5 5 L12.5 9.5 L7.5 14 Z" fill="#222"/></svg>
<div style="left:0px;top:938px;width:1921px;height:28px;background:#f3f3f3;"></div>
<div style="left:0px;top:938px;width:1921px;height:1px;background:#d4d4d4;"></div>
<div style="left:13.14px;top:944px;height:18px;line-height:18px;font-size:13.5px;letter-spacing:-0.535px;color:#444;white-space:pre;">Ready</div>
<div style="left:138.16px;top:944px;height:18px;line-height:18px;font-size:13.5px;letter-spacing:-0.357px;color:#333;white-space:pre;font-weight:bold;">Accessibility: Investigate</div>
<div style="left:1429.39px;top:944px;height:18px;line-height:18px;font-size:13.5px;letter-spacing:-0.273px;color:#333;white-space:pre;">Display Settings</div>
<div style="left:1876.97px;top:944px;height:18px;line-height:18px;font-size:13.5px;letter-spacing:-0.839px;color:#555;white-space:pre;">100%</div>
<div style="left:1547px;top:939px;width:50px;height:26px;background:#c6c6c6;"></div>
<svg style="left:0;top:938px" width="1921" height="28" viewBox="0 938 1921 28"><rect x="78.5" y="945.5" width="13" height="13" fill="#fff" stroke="#666" stroke-width="1"/><rect x="85" y="945" width="7" height="3.6" fill="#666"/><rect x="81.3" y="950.1" width="1.7" height="1" fill="#666"/><rect x="84.4" y="950.1" width="1.7" height="1" fill="#666"/><rect x="87.5" y="950.1" width="1.7" height="1" fill="#666"/><rect x="81.3" y="953.1" width="1.7" height="1" fill="#666"/><rect x="84.4" y="953.1" width="1.7" height="1" fill="#666"/><rect x="87.5" y="953.1" width="1.7" height="1" fill="#666"/><rect x="81.3" y="956.0" width="1.7" height="1" fill="#666"/><rect x="84.4" y="956.0" width="1.7" height="1" fill="#666"/><rect x="87.5" y="956.0" width="1.7" height="1" fill="#666"/><circle cx="80.5" cy="947.3" r="4.3" fill="#f3f3f3"/><circle cx="80.5" cy="947.3" r="3.3" fill="#666"/><path d="M121.9 945.1 A7.5 7.5 0 0 0 122.8 959.8" fill="none" stroke="#555" stroke-width="1.1" stroke-dasharray="3.4 1.5"/><path d="M123.5 944.2 V952.2 M121.4 950.4 L123.5 952.5 L125.6 950.4" fill="none" stroke="#444" stroke-width="1"/><path d="M127 950.3 H131.6 M129.8 948.4 L131.7 950.3 L129.8 952.2" fill="none" stroke="#444" stroke-width="1"/><path d="M125.6 961.2 L132.2 954.8" stroke="#444" stroke-width="2.2" stroke-linecap="round"/><path d="M126.2 953.9 L134.8 961.4" stroke="#444" stroke-width="1.1"/><path d="M132.2 954.8 L134.4 953.9" stroke="#444" stroke-width="1"/><rect x="1409" y="943" width="19" height="13" rx="1.5" fill="#444"/><path d="M1413 960 H1418" stroke="#444" stroke-width="1.4"/><circle cx="1423.2" cy="956.4" r="5.6" fill="#f3f3f3"/><circle cx="1423.2" cy="956.4" r="3.1" fill="none" stroke="#444" stroke-width="2.4"/><circle cx="1423.2" cy="956.4" r="4.6" fill="none" stroke="#444" stroke-width="1.6" stroke-dasharray="1.8 1.8"/><path d="M1564.5 944.5 H1579.5 V959.5 H1564.5 Z M1564.5 949.5 H1579.5 M1564.5 954.5 H1579.5 M1569.5 944.5 V959.5 M1574.5 944.5 V959.5" fill="none" stroke="#777" stroke-width="1"/><rect x="1613.5" y="944.5" width="16" height="14" rx="0.8" fill="none" stroke="#666" stroke-width="1"/><rect x="1617.5" y="947.5" width="8.5" height="10" fill="none" stroke="#666" stroke-width="1"/><path d="M1619.5 950.5 H1624 M1619.5 952.5 H1624 M1619.5 954.5 H1624" stroke="#666" stroke-width="0.9"/><path d="M1663.5 944.5 H1679.5 V959.5 H1663.5 Z M1663.5 951.5 H1674.5 M1668.5 944.5 V951.5 M1674.5 944.5 V951.5" fill="none" stroke="#666" stroke-width="1"/></svg>
<div style="left:1704px;top:951px;width:10px;height:1px;background:#555;"></div>
<div style="left:1720px;top:951px;width:126px;height:1px;background:#555;"></div>
<div style="left:1780px;top:945px;width:6px;height:14px;background:#444;"></div>
<div style="left:1851px;top:951px;width:10px;height:1px;background:#555;"></div>
<div style="left:1855px;top:947px;width:1px;height:10px;background:#555;"></div>
<div style="left:1920px;top:0px;width:1px;height:966px;background:#444;"></div>
<div style="left:0px;top:965px;width:1921px;height:1px;background:#777;"></div>
</body></html>
